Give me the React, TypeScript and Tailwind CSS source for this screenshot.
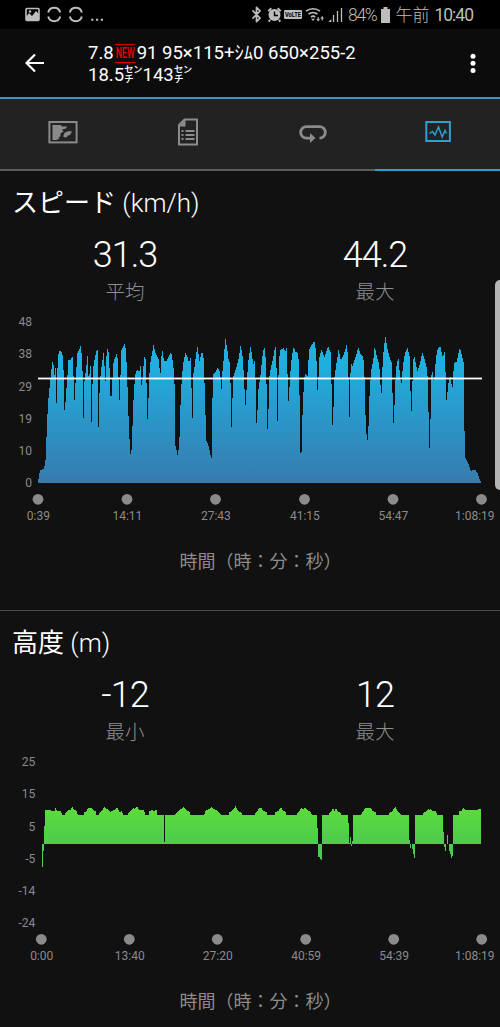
import { Bluetooth } from 'lucide-react';

interface Tick {
  x: number;
  label: string;
}

interface Stat {
  value: string;
  label: string;
}

// Chart points, [x, y] pairs inside a 500 x 220 drawing
const speedPoints = `
38,172.7 40,160 44,159 45.5,150 46.5,127 48,93 50,73 52,55 53,50 54,60 54.8,68 55.5,58 56,64 56.5,93.5 57.2,66
58,46 59.5,41 61,41 62.5,45 63.5,60 64.2,100 65,100 66,85 67.3,68 68.5,50 70,50 71,49 72.5,47 73.5,66 74.2,90 75,90
75.6,70 77.5,43 79.3,40 80.5,36 82,46 82.7,66 83.3,107.5 84,107.5 84.3,72 86,60 87.5,46 88,60 89,72 90,57 90.7,55
91.2,111.5 92,111.5 92.7,61 94.3,51 96.7,40 97.8,40 98.2,116.5 99,116.5 99.6,77 101,60 103.5,43 104.3,51 105.3,77.5
106.3,47 108,36 109.3,50 110.3,86 111.5,86 112.3,71 113.7,50 115,48 116.7,44 118,50 119.2,90 120,90 120.4,68
121.5,40.5 124.5,34 126,40 127.5,77 129,120 130.3,143.5 131.3,143.5 132,130 133.5,90 135,66 137,60 139.3,62 140.6,55
141.6,77 143,66 144,46 146,50 147.3,108.5 148,108.5 149,68 150.5,52 153.5,35 155.3,42 157.3,47 159.3,50 160,77
161,50 162.3,40 164,51 166.7,51 168,47 169,46 171,42 172.3,48 173.7,59 174.7,77 175.3,135 177.5,145 178.3,143
179.5,127 181,80 183,55 185.3,43 187.7,47 189,53 191,47 192,107.7 192.8,107.7 193.3,64 194.5,57 197.3,36 199.7,52
201.3,43 203.3,43 204.7,78 206.3,130 209,137 211,147.7 211.8,147.7 212.3,95 213.3,64 215.7,62 217.7,58 220.3,62
221,79 221.8,79 222.7,57 224,47 225.3,28 227.3,39 228.3,48 230.3,55 231,116.7 231.8,116.7 233,68 234.3,63.5
236.7,56.7 239,46.7 240.7,35 242.7,47 244,68 245.3,96.7 246,92 247,68 248.7,48 250.7,36 253.3,55 255.3,49 256,112.7
257,112.7 258.3,80 260.3,67 262.3,47 264.3,36 266.3,55 267,119 268,119 269.3,67 271.3,56 273.3,47 275,37.3 276.3,36
277,110.7 277.8,110.7 278.7,53 280.3,40 283.7,38 285,42 287,37.3 288,90.7 288.8,90.7 290,67 291.7,48 293.7,36.7
295.7,42 298.3,43 299.3,70 300.3,142.7 301.7,142 302.7,97 304.3,68 305.7,63 307.7,66.7 309,40 311.7,35 314.3,31
316.3,42 317.2,80 318,80 319.3,48 321.7,39 324.3,48 326.7,40 328.3,37 331,43 332.2,115 333,115 334.3,68 336.7,52
338.7,39 340.7,50 342.7,47 344.7,42 346.7,34 348.3,50 349,106.7 349.8,106.7 350.7,52 352.7,56 355.3,48 358.3,37
360.7,45 363.3,46 364.7,70 365.7,113 367,130 367.8,130 368.7,113 369.7,80 371.3,60 373.3,50 374.7,36 377,47 379.3,55
381,83 381.8,83 382.7,50 385.3,26 387.3,38 389.3,47 392,53 393,112.7 394,112.7 395,77 396.7,53 398.7,49 400,66
401.3,75 403,55 405.3,42 407.7,38 409.7,47 411,100.7 411.8,100.7 413,50 414.7,47 417.3,62 420,53 422.3,42 424.7,50
427.3,60 428.3,87 429,137.7 429.8,137.7 430.6,105 431.3,68 432,58 434,74 436,47 438,38 440.3,36 442.7,47 444.7,42
445.7,67 446.7,95 448,75 450.3,65 452.3,80.7 454,53 456.7,52 459.7,37.7 461.3,43 463.5,52 464.3,113 465.3,148
468,153 470.7,160.7 475.3,160 478,164 480,170 481,172.7`;

const altitudePoints = `
42,104 42,127 43,127 43,111 44,111 44,86 45,86 45,70 51,70 51,71 55,71 55,68 56,68 57,71 61,71 62,75 65,75 65,73
67,72 68,70 71,70 72,67 73,67 74,70 76,70 78,75 84,75 84,72 87,71 88,68 92,68 94,71 96,71 96,75 99,75 100,72 103,70
104,67 107,69 109,70 110,72 114,70 116,68 118,68 119,72 122,71 123,75 128,75 128,73 131,71 133,68 135,69 136,67
138,67 139,70 143,70 144,69 145,75 149,75 149,71 152,70 154,71 155,70 157,70 157,75 164,75 164,102 165,102 165,75
175,75 177,72 180,69 182,69 183,67 185,68 187,71 190,72 190,75 204,75 206,70 209,69 211,67 213,69 216,70 219,73
221,75 229,75 229,72 232,71 233,69 235,68 235,66 236,66 237,69 239,72 242,73 242,75 255,75 256,72 258,70 259,68
262,68 263,71 267,72 267,75 275,75 275,72 279,71 280,68 282,68 283,71 286,72 286,75 297,75 298,72 300,70 301,68
303,69 305,67 307,70 311,72 312,75 317,75 317,88 318,88 318,117 320,117 320,119 322,120 322,75 329,75 330,72
332,71 333,67 334,71 335,71 336,67 337,71 341,73 341,75 348,75 348,83 349,83 349,103 350,103 350,97 351,97 351,106
352,106 352,101 353,101 353,75 361,75 362,73 364,70 365,68 370,68 371,67 372,71 376,72 376,75 389,75 390,72 393,71
394,68 396,67 397,70 400,74 401,75 409,75 409,100 410,100 410,108 411,108 411,104 412,104 412,109 413,109 414,118
415,118 415,75 423,75 424,72 427,71 428,69 430,70 431,68 432,71 436,71 437,75 443,75 443,92 444,92 444,107 445,107
445,111 446,111 446,104 447,104 447,95 448,95 448,104 449,104 449,109 451,115 451,118 452,118 453,115 453,75 459,75
459,71 462,71 463,68 465,70 478,70 478,69 481,69 481,104`;

const speedTicks: Tick[] = [
  { x: 38, label: '0:39' },
  { x: 127, label: '14:11' },
  { x: 215.5, label: '27:43' },
  { x: 304.5, label: '41:15' },
  { x: 393, label: '54:47' },
  { x: 481.5, label: '1:08:19' },
];

const altitudeTicks: Tick[] = [
  { x: 41.3, label: '0:00' },
  { x: 129.3, label: '13:40' },
  { x: 217.3, label: '27:20' },
  { x: 305.7, label: '40:59' },
  { x: 393.7, label: '54:39' },
  { x: 481.7, label: '1:08:19' },
];

interface AxesProps {
  yLabels: string[];
  right: number;
  top: number;
  ticks: Tick[];
  tickY: number;
}

function Axes({ yLabels, right, top, ticks, tickY }: AxesProps) {
  return (
    <g fill="#8b8b8b" fontSize="12">
      {yLabels.map((label, i) => (
        <text key={label} x={right} y={top + i * 32.15} textAnchor="end">
          {label}
        </text>
      ))}
      {ticks.map((tick) => (
        <g key={tick.label}>
          <circle cx={tick.x} cy={tickY} r={5.4} />
          <text x={Math.min(tick.x + 0.4, 474.8)} y={tickY + 20.4} textAnchor="middle">
            {tick.label}
          </text>
        </g>
      ))}
    </g>
  );
}

function SpeedChart() {
  return (
    <svg width="500" height="220" viewBox="0 0 500 220" className="block">
      <defs>
        <linearGradient id="speed" gradientUnits="userSpaceOnUse" x1="0" y1="50" x2="0" y2="173">
          <stop offset="0" stopColor="#1eb0e0" />
          <stop offset="1" stopColor="#387bae" />
        </linearGradient>
      </defs>
      <polygon points={speedPoints} fill="url(#speed)" shapeRendering="crispEdges" />
      <rect x="38" y="67.6" width="444" height="1.8" fill="#fff" />
      <Axes yLabels={['48', '38', '29', '19', '10', '0']} right={32} top={16.2} ticks={speedTicks} tickY={189.3} />
    </svg>
  );
}

function AltitudeChart() {
  return (
    <svg width="500" height="230" viewBox="0 0 500 230" className="block">
      <defs>
        <linearGradient id="altitude" gradientUnits="userSpaceOnUse" x1="0" y1="68" x2="0" y2="104">
          <stop offset="0" stopColor="#5bdc3a" />
          <stop offset="1" stopColor="#4ccb50" />
        </linearGradient>
      </defs>
      <polygon points={altitudePoints} fill="url(#altitude)" shapeRendering="crispEdges" />
      {/* gaps between the laps */}
      <path d="M318 75h4v29h-4zM349 75h4v22h-4zM410 75h5v29h-5zM444 75h9v20h-9z" fill="#111" />
      <Axes yLabels={['25', '15', '5', '-5', '-14', '-24']} right={35.3} top={26.2} ticks={altitudeTicks} tickY={199.3} />
    </svg>
  );
}

function Stats({ items }: { items: Stat[] }) {
  return (
    <div className="grid h-[76px] grid-cols-2 text-center">
      {items.map((item) => (
        <div key={item.label}>
          <div className="h-[42px] text-[36px] leading-[43px] font-light tracking-[-1px]">{item.value}</div>
          <div className="text-[19.5px] leading-[33px] font-light text-[#8f8f8f]">{item.label}</div>
        </div>
      ))}
    </div>
  );
}

function AxisTitle() {
  return <p className="pl-[21px] text-center text-[18px] leading-6 text-[#8b8b8b]">時間（時：分：秒）</p>;
}

function StatusBar() {
  return (
    <div className="flex h-[29px] items-center bg-black text-[#bdbdbd]">
      <svg width="80" height="29" viewBox="0 0 80 29" className="ml-6">
        <rect x="2" y="8.5" width="13" height="12" rx="1" fill="none" stroke="currentColor" strokeWidth="1.6" />
        <path d="M2 20v-3l3-4 3 3 4-5 3 3v6z" fill="currentColor" />
        <circle cx="6" cy="11.5" r="1.2" fill="currentColor" />
        <g fill="none" stroke="currentColor" strokeWidth="2">
          <path d="M24.2 12.5a6.2 6.2 0 0 1 12 0M24.2 16.5a6.2 6.2 0 0 0 12 0" />
          <path d="M45.8 12.5a6.2 6.2 0 0 1 12 0M45.8 16.5a6.2 6.2 0 0 0 12 0" />
        </g>
        <path d="M67.2 18.8h2.2v2h-2.2zM72 18.8h2.2v2H72zM76.8 18.8H79v2h-2.2z" fill="currentColor" />
      </svg>
      <Bluetooth className="ml-[144px] h-[17px] w-[17px]" strokeWidth={2.4} />
      <svg width="79" height="29" viewBox="265 0 79 29">
        {/* alarm */}
        <circle cx="274.5" cy="15" r="6" fill="currentColor" />
        <path d="M268.3 11.3l3-3M280.7 11.3l-3-3M270 20l-1.3 1.6M279 20l1.3 1.6" stroke="currentColor" strokeWidth="2" />
        <path d="M274.5 11.5v4h3.5" fill="none" stroke="#000" strokeWidth="1.4" />
        {/* volte */}
        <rect x="284" y="10" width="18" height="9" rx="1" fill="currentColor" />
        <text x="285" y="17" fontSize="6.5" fontWeight="700" fill="#000" textLength="16" lengthAdjust="spacingAndGlyphs">
          VoLTE
        </text>
        {/* wifi */}
        <g fill="none" stroke="currentColor" strokeWidth="1.6">
          <path d="M306 11.2a11 11 0 0 1 14 0M308.5 14.2a7 7 0 0 1 9 0M311 17a3.4 3.4 0 0 1 4.2 0" />
        </g>
        <path d="M313 21l-2-2.3h4z" fill="currentColor" />
        <path d="M316.4 19l1.8 2.4 1.8-2.4h-1.2v-2h-1.2v2zM320.4 18.5l1.8-2.4 1.8 2.4h-1.2v2h-1.2v-2z" fill="currentColor" />
        {/* signal */}
        <path d="M328.3 22l3-3v3z" fill="currentColor" />
        <path d="M333.5 22v-7M337.5 22V11M341.5 22V8" stroke="currentColor" strokeWidth="1.3" />
      </svg>
      <span className="ml-1 pt-0.5 text-[17.5px] font-light tracking-[-1.3px]">84%</span>
      <svg width="11" height="16" viewBox="0 0 11 16" className="mt-px ml-1">
        <path d="M3.5 0h4v2H10v14H1V2h2.5z" fill="currentColor" />
      </svg>
      <span className="ml-[4px] pt-0.5 text-[17px] font-light">午前</span>
      <span className="ml-[5px] pt-0.5 text-[17.5px] tracking-[-1px]">10:40</span>
    </div>
  );
}

function Header() {
  return (
    <header className="flex h-[70px] border-b-2 border-[#3898c9] bg-[#0c0c0c]">
      <svg width="20" height="20" viewBox="0 0 20 20" className="mt-[24px] ml-[25px]">
        <path d="M19 10H2M10 1.500L1.500 10l8.500 8.500" fill="none" stroke="#fff" strokeWidth="2.200" />
      </svg>
      <h1 className="mt-[13px] ml-[43px] w-[381px] text-[18.5px] leading-[22px]">
        <div className="flex h-[22px] items-center whitespace-pre">
          <span>7.8</span>
          <span className="mx-[1.5px] flex h-[19px] w-5 items-center justify-center border-y border-[#e00000] text-[15px] text-[#f00000]">
            <span className="scale-x-[0.58] font-medium">NEW</span>
          </span>
          <span>91 95×115+ｼﾑ0 650×255-2</span>
        </div>
        <div className="h-[22px]">18.5㌢143㌢</div>
      </h1>
      <svg width="8" height="22" viewBox="0 0 8 22" className="mt-[23px] shrink-0" fill="#fff">
        <circle cx="4" cy="4.2" r="2.5" />
        <circle cx="4" cy="11.3" r="2.5" />
        <circle cx="4" cy="18.4" r="2.5" />
      </svg>
    </header>
  );
}

function Tabs() {
  const tab = 'flex h-[72px] items-center justify-center border-b-2 border-[#5c5c5c] pb-[4px]';
  return (
    <nav className="grid h-[72px] grid-cols-4 bg-[#222] text-[#8b8b8b]">
      <div className={tab}>
        <svg width="30" height="28" viewBox="0 0 30 28">
          <rect x="1.4" y="4" width="27.2" height="20.4" fill="none" stroke="currentColor" strokeWidth="2" />
          <path d="M4.5 7H13l1 1.5h5l-1 2-4 1 1.5 2-3 2v3l-2 .5 1 1.5-3 1.5h-4z" fill="currentColor" />
          <path d="M15.5 19c-.5-4 3-6.5 8.5-5.5l-2 3.500-2 .5-1.500 2z" fill="currentColor" />
        </svg>
      </div>
      <div className={tab}>
        <svg width="22" height="30" viewBox="0 0 22 30">
          <path d="M7.5 2.5H20v25H2V8z" fill="none" stroke="currentColor" strokeWidth="2" />
          <path d="M2 9.5L8.5 2v7.5z" fill="currentColor" />
          <path d="M4.5 14h2M8.5 14h9M4.5 18h2M8.5 18h9M4.5 22h2M8.5 22h9" stroke="currentColor" strokeWidth="1.8" />
        </svg>
      </div>
      <div className={tab}>
        <svg width="28" height="22" viewBox="0 0 28 22">
          <path d="M12 17.2H7.5a5.8 5.8 0 0 1 0-11.6h13a5.8 5.8 0 0 1 0 11.6" fill="none" stroke="currentColor" strokeWidth="2.8" />
          <path d="M11 12l5.500 5-5.500 5z" fill="currentColor" />
        </svg>
      </div>
      <div className="flex h-[72px] items-center justify-center border-b-2 border-[#2ba0d6] pb-[4px] text-[#2ba0d6]">
        <svg width="26" height="24" viewBox="0 0 26 24">
          <rect x="1.3" y="2" width="23.6" height="19" fill="none" stroke="currentColor" strokeWidth="2" />
          <path d="M4.5 13.5l3-2 2.5 3.5 3.5-8 3.7 10 2.8-6.500 1.5 3" fill="none" stroke="currentColor" strokeWidth="1.5" />
        </svg>
      </div>
    </nav>
  );
}

export default function App() {
  return (
    <div className="relative h-[1027px] w-[500px] overflow-hidden bg-[#111] font-[Roboto,'Noto_Sans_CJK_JP',sans-serif] text-white">
      <StatusBar />
      <Header />
      <Tabs />
      <section className="h-[440px] border-b border-[#4a4a4a]">
        <h2 className="h-[63px] pt-[13px] pl-3 text-[26px] leading-[38px] font-light">
          <span className="font-normal">スピード</span> (km/h)
        </h2>
        <Stats items={[{ value: '31.3', label: '平均' }, { value: '44.2', label: '最大' }]} />
        <SpeedChart />
        <div className="mt-[20px]">
          <AxisTitle />
        </div>
      </section>
      <section>
        <h2 className="h-[63px] pt-[13px] pl-3 text-[26px] leading-[38px] font-light">
          <span className="font-normal">高度</span> (m)
        </h2>
        <Stats items={[{ value: '-12', label: '最小' }, { value: '12', label: '最大' }]} />
        <div className="-mt-[10px]">
          <AltitudeChart />
        </div>
        <div className="mt-[20px]">
          <AxisTitle />
        </div>
      </section>
      {/* edge panel handle */}
      <div className="absolute top-[280px] right-0 h-[210px] w-[5px] rounded-l-[5px] bg-[#b5b5b5]" />
    </div>
  );
}
